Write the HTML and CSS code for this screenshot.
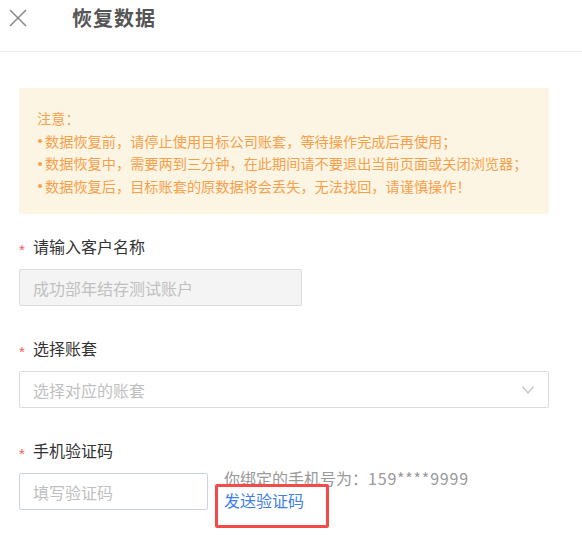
FILE: index.html
```html
<!DOCTYPE html>
<html lang="zh">
<head>
<meta charset="utf-8">
<link rel="stylesheet" href="styles.css">
</head>
<body>
<div class="header">
  <svg class="close" width="18" height="18" viewBox="0 0 18 18"><path d="M1 1L17 17M17 1L1 17" stroke="#8a8a8a" stroke-width="1.6" fill="none"/></svg>
  <div class="title">恢复数据</div>
</div>
<div class="content">
  <div class="notice">
    <div>注意：</div>
    <div><span class="dot"></span>数据恢复前，请停止使用目标公司账套，等待操作完成后再使用；</div>
    <div><span class="dot"></span>数据恢复中，需要两到三分钟，在此期间请不要退出当前页面或关闭浏览器；</div>
    <div><span class="dot"></span>数据恢复后，目标账套的原数据将会丢失，无法找回，请谨慎操作！</div>
  </div>

  <div class="label"><span class="req">*</span>请输入客户名称</div>
  <div class="input disabled name">成功部年结存测试账户</div>

  <div class="label"><span class="req">*</span>选择账套</div>
  <div class="input select">
    <span>选择对应的账套</span>
    <svg width="12" height="8" viewBox="0 0 12 8"><path d="M0.5 0.5L6 7L11.5 0.5" stroke="#c4c4c4" stroke-width="1.2" fill="none"/></svg>
  </div>

  <div class="label"><span class="req">*</span>手机验证码</div>
  <div class="code-row">
    <div class="input code">填写验证码</div>
    <div class="code-info">
      <div class="phone">你绑定的手机号为：<span class="num">159****9999</span></div>
      <div class="send">发送验证码</div>
      <div class="mark"></div>
    </div>
  </div>
</div>
</body>
</html>
```
FILE: styles.css
```css
* { box-sizing: border-box; }
body {
  margin: 0;
  background: #fff;
  font-family: "Noto Sans CJK SC", "Noto Sans", sans-serif;
  width: 582px;
  height: 535px;
  overflow: hidden;
}
.header {
  height: 52px;
  border-bottom: 1px solid #ececec;
  display: flex;
  align-items: flex-start;
  padding-left: 9px;
}
.close { margin-top: 9px; }
.title {
  margin-left: 45px;
  margin-top: 4px;
  font-size: 20px;
  line-height: 28px;
  font-weight: bold;
  color: #555;
  letter-spacing: 1px;
}
.content {
  padding-left: 19px;
  width: 549px;
}
.notice {
  margin-top: 36px;
  height: 126px;
  background: #fdf5e3;
  padding: 19px 0 0 18px;
  font-size: 14.2px;
  line-height: 22.5px;
  color: #f7a04c;
  white-space: nowrap;
}
.dot {
  display: inline-block;
  width: 4px;
  height: 4px;
  border-radius: 50%;
  background: #f7a04c;
  margin: 0 3px 3px 1px;
  vertical-align: middle;
}
.label {
  margin-top: 22px;
  height: 20px;
  font-size: 16px;
  line-height: 20px;
  color: #333;
  display: flex;
  align-items: center;
}
.req {
  color: #f45a5a;
  font-size: 15px;
  width: 14px;
  line-height: 15px;
  padding-top: 6px;
  font-family: "Liberation Sans", sans-serif;
}
.input {
  margin-top: 13px;
  height: 37px;
  border: 1px solid #dcdcdc;
  border-radius: 2px;
  font-size: 16px;
  color: #c0c0c0;
  display: flex;
  align-items: center;
  padding-left: 13px;
}
.disabled {
  background: #f4f4f4;
  width: 283px;
}
.select {
  width: 530px;
  justify-content: space-between;
  padding-right: 14px;
}
.name + .label, .select + .label { margin-top: 32px; }
.code-row {
  display: flex;
  align-items: flex-start;
}
.code {
  width: 189px;
  border-color: #c9d4e8;
}
.code-info {
  position: relative;
  margin-left: 16px;
  margin-top: 7px;
  font-size: 16px;
  line-height: 22px;
}
.phone { color: #999; }
.num { letter-spacing: 0.8px; }
.send { color: #3f80ea; }
.mark {
  position: absolute;
  left: -9px;
  top: 17px;
  width: 114px;
  height: 44px;
  border: 3px solid #f34a4a;
  border-radius: 2px;
}
```
